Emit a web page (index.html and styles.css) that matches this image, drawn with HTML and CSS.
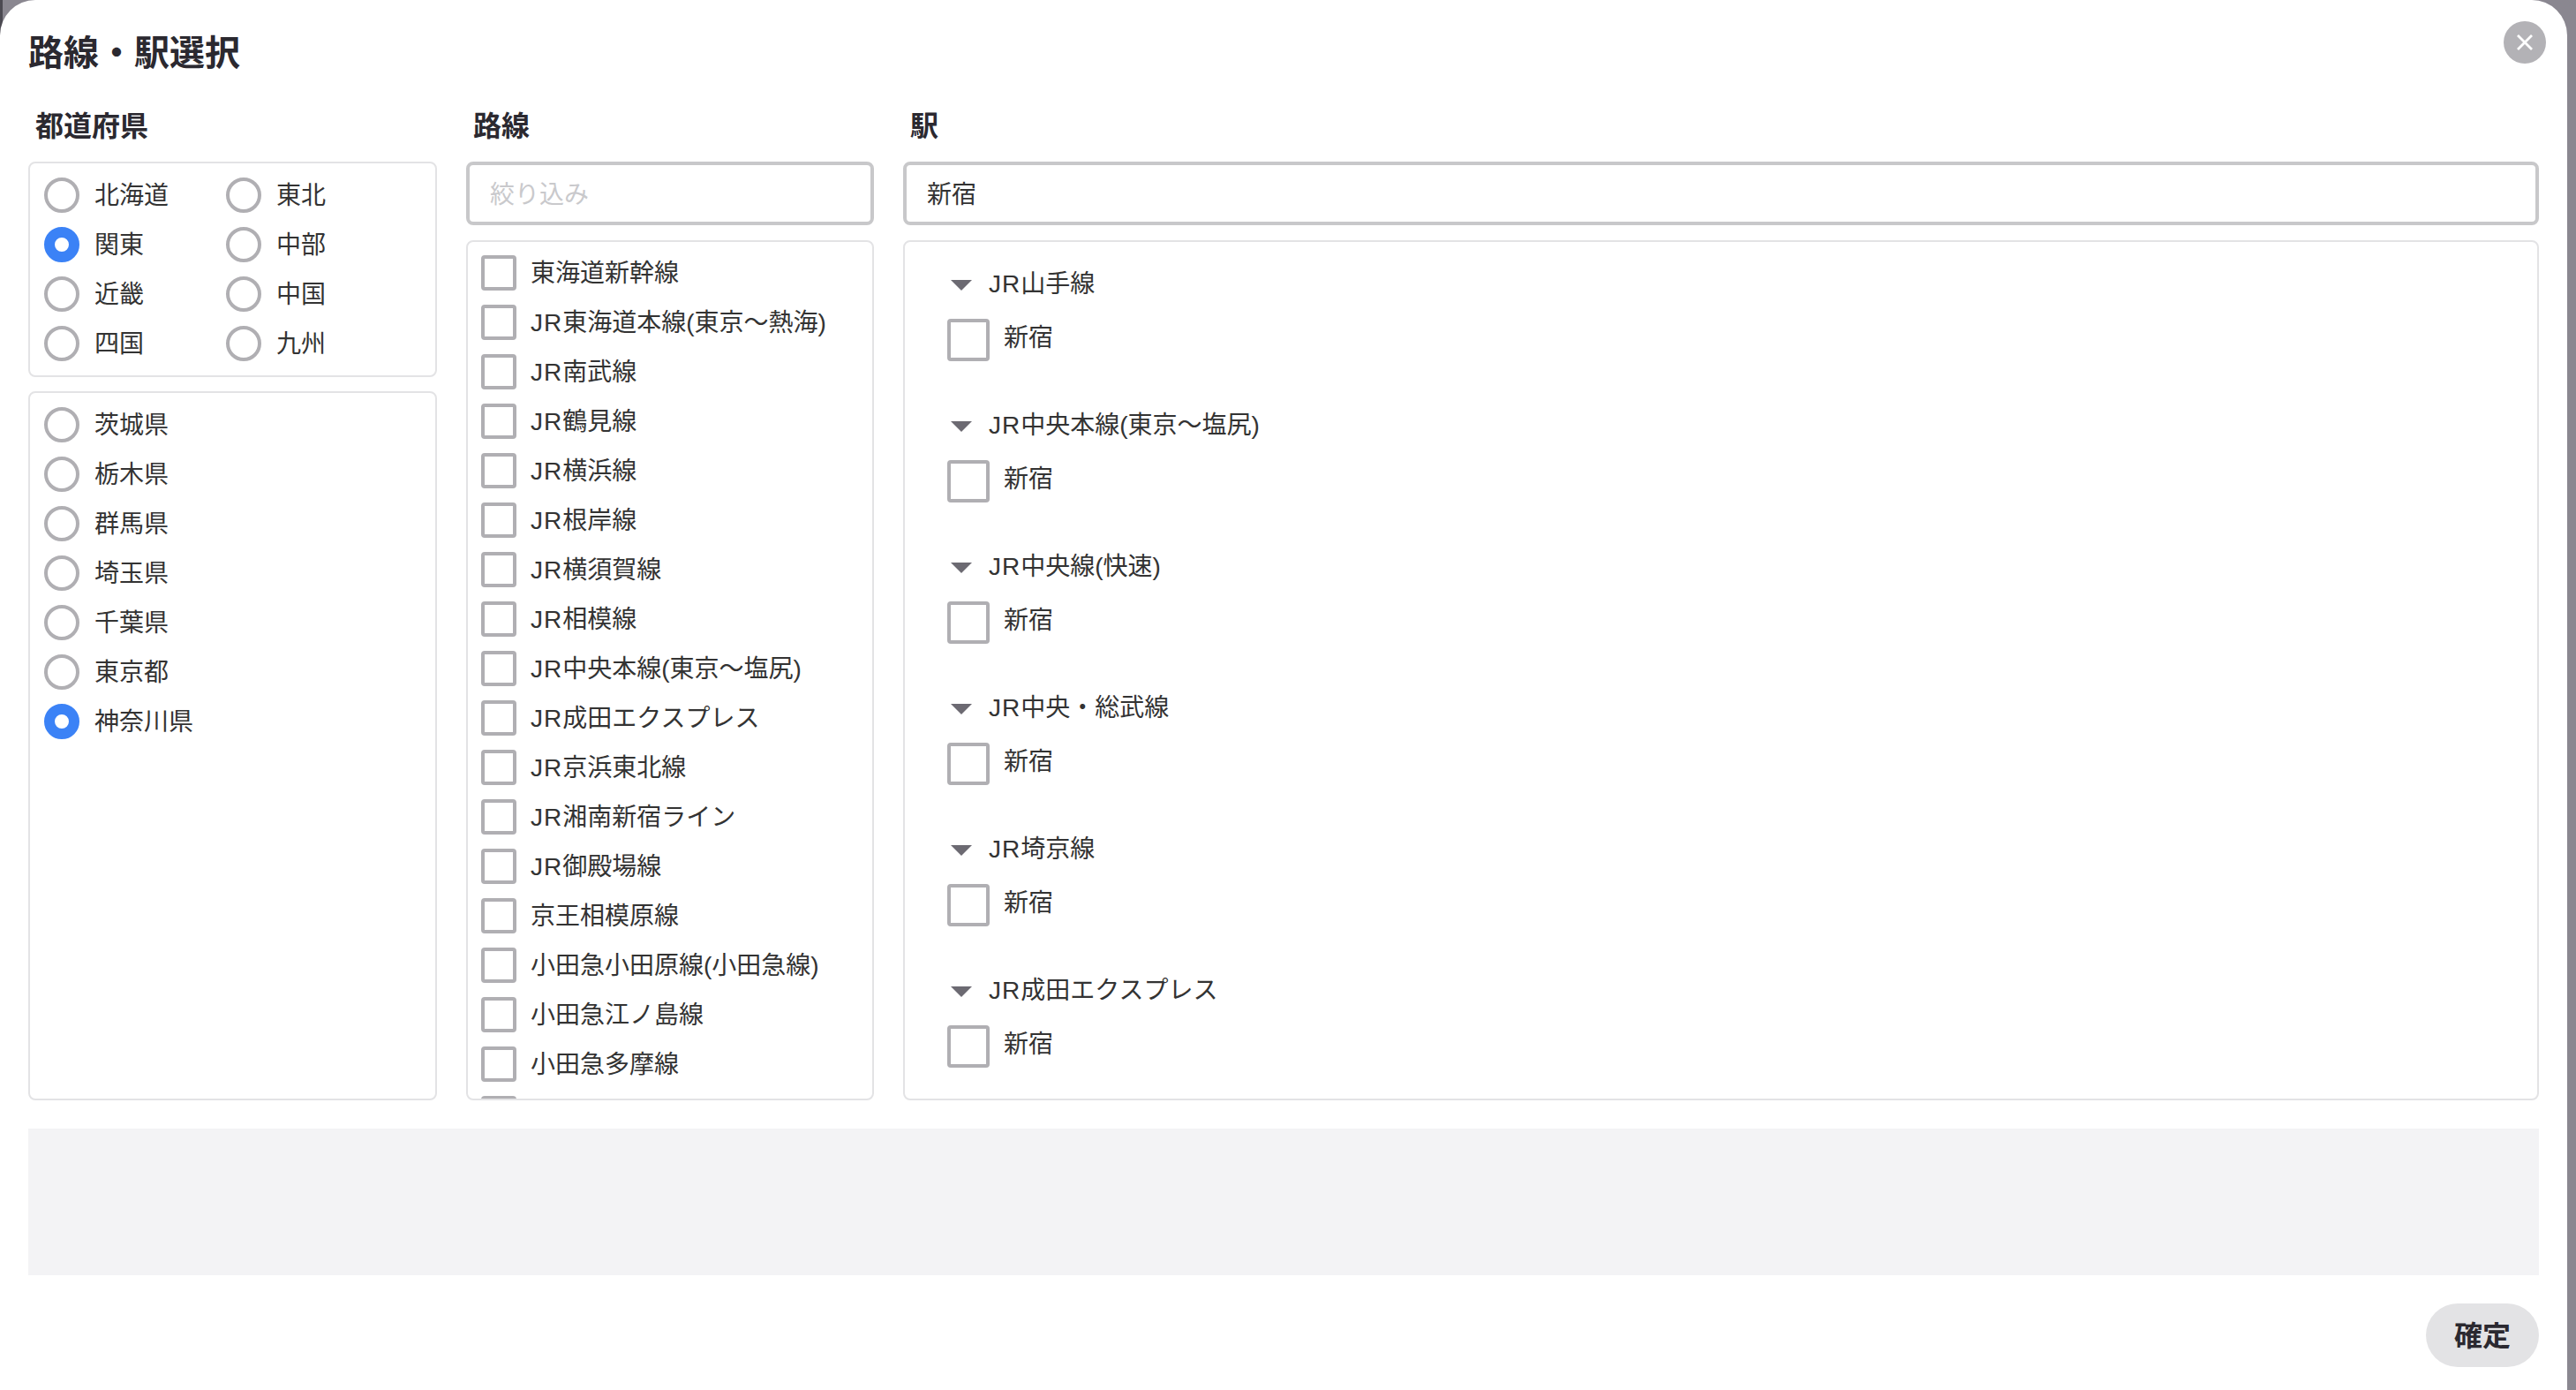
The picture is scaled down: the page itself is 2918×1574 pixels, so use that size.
FILE: index.html
```html
<!DOCTYPE html>
<html lang="ja">
<head>
<meta charset="utf-8">
<title>路線・駅選択</title>
<link rel="stylesheet" href="styles.css">
</head>
<body>
<div class="modal">
  <header class="modal-head">
    <h1 class="title">路線・駅選択</h1>
    <button class="close" type="button" aria-label="閉じる">
      <svg width="18" height="18" viewBox="0 0 18 18"><path d="M1 1 17 17M17 1 1 17" stroke="#fff" stroke-width="2.8" fill="none"/></svg>
    </button>
  </header>
  <div class="columns">
    <section class="col col-pref">
      <h2 class="heading">都道府県</h2>
      <div class="panel regions">
        <div class="opt"><span class="radio"></span>北海道</div>
        <div class="opt"><span class="radio"></span>東北</div>
        <div class="opt"><span class="radio on"></span>関東</div>
        <div class="opt"><span class="radio"></span>中部</div>
        <div class="opt"><span class="radio"></span>近畿</div>
        <div class="opt"><span class="radio"></span>中国</div>
        <div class="opt"><span class="radio"></span>四国</div>
        <div class="opt"><span class="radio"></span>九州</div>
      </div>
      <div class="panel prefs">
        <div class="opt"><span class="radio"></span>茨城県</div>
        <div class="opt"><span class="radio"></span>栃木県</div>
        <div class="opt"><span class="radio"></span>群馬県</div>
        <div class="opt"><span class="radio"></span>埼玉県</div>
        <div class="opt"><span class="radio"></span>千葉県</div>
        <div class="opt"><span class="radio"></span>東京都</div>
        <div class="opt"><span class="radio on"></span>神奈川県</div>
      </div>
    </section>
    <section class="col col-line">
      <h2 class="heading">路線</h2>
      <div class="field placeholder">絞り込み</div>
      <div class="panel lines">
        <div class="opt"><span class="check"></span><span>東海道新幹線</span></div>
        <div class="opt"><span class="check"></span><span><span class="jr">JR</span>東海道本線(東京〜熱海)</span></div>
        <div class="opt"><span class="check"></span><span><span class="jr">JR</span>南武線</span></div>
        <div class="opt"><span class="check"></span><span><span class="jr">JR</span>鶴見線</span></div>
        <div class="opt"><span class="check"></span><span><span class="jr">JR</span>横浜線</span></div>
        <div class="opt"><span class="check"></span><span><span class="jr">JR</span>根岸線</span></div>
        <div class="opt"><span class="check"></span><span><span class="jr">JR</span>横須賀線</span></div>
        <div class="opt"><span class="check"></span><span><span class="jr">JR</span>相模線</span></div>
        <div class="opt"><span class="check"></span><span><span class="jr">JR</span>中央本線(東京〜塩尻)</span></div>
        <div class="opt"><span class="check"></span><span><span class="jr">JR</span>成田エクスプレス</span></div>
        <div class="opt"><span class="check"></span><span><span class="jr">JR</span>京浜東北線</span></div>
        <div class="opt"><span class="check"></span><span><span class="jr">JR</span>湘南新宿ライン</span></div>
        <div class="opt"><span class="check"></span><span><span class="jr">JR</span>御殿場線</span></div>
        <div class="opt"><span class="check"></span><span>京王相模原線</span></div>
        <div class="opt"><span class="check"></span><span>小田急小田原線(小田急線)</span></div>
        <div class="opt"><span class="check"></span><span>小田急江ノ島線</span></div>
        <div class="opt"><span class="check"></span><span>小田急多摩線</span></div>
        <div class="opt"><span class="check"></span></div>
      </div>
    </section>
    <section class="col col-station">
      <h2 class="heading">駅</h2>
      <div class="field">新宿</div>
      <div class="panel stations">
        <div class="group">
          <div class="group-name"><span class="tri"></span><span><span class="jr">JR</span>山手線</span></div>
          <div class="station"><span class="check big"></span>新宿</div>
        </div>
        <div class="group">
          <div class="group-name"><span class="tri"></span><span><span class="jr">JR</span>中央本線(東京〜塩尻)</span></div>
          <div class="station"><span class="check big"></span>新宿</div>
        </div>
        <div class="group">
          <div class="group-name"><span class="tri"></span><span><span class="jr">JR</span>中央線(快速)</span></div>
          <div class="station"><span class="check big"></span>新宿</div>
        </div>
        <div class="group">
          <div class="group-name"><span class="tri"></span><span><span class="jr">JR</span>中央・総武線</span></div>
          <div class="station"><span class="check big"></span>新宿</div>
        </div>
        <div class="group">
          <div class="group-name"><span class="tri"></span><span><span class="jr">JR</span>埼京線</span></div>
          <div class="station"><span class="check big"></span>新宿</div>
        </div>
        <div class="group">
          <div class="group-name"><span class="tri"></span><span><span class="jr">JR</span>成田エクスプレス</span></div>
          <div class="station"><span class="check big"></span>新宿</div>
        </div>
      </div>
    </section>
  </div>
  <div class="selection"></div>
  <footer class="modal-foot"><button class="confirm" type="button">確定</button></footer>
</div>
</body>
</html>
```
FILE: styles.css
```css
* { box-sizing: border-box; }
html, body { height: 100%; }
body {
  margin: 0;
  background: linear-gradient(90deg, #4c4a52 3px, #8a8790 3px);
  font-family: "Liberation Sans", "Noto Sans CJK JP", sans-serif;
  color: #333;
  overflow: hidden;
}
.modal {
  width: 2908px;
  height: 1574px;
  background: #fff;
  border-radius: 40px 40px 0 0;
  padding: 0 32px;
  display: flex;
  flex-direction: column;
}
.modal-head {
  height: 120px;
  flex: none;
  display: flex;
  justify-content: space-between;
  align-items: flex-start;
}
.title {
  margin: 31px 0 0;
  font-size: 40px;
  line-height: 58px;
  font-weight: 700;
  color: #2b2930;
}
.close {
  width: 48px;
  height: 48px;
  margin: 24px -8px 0 0;
  border: 0;
  padding: 0;
  border-radius: 50%;
  background: #b3b2b6;
  display: flex;
  align-items: center;
  justify-content: center;
}
.columns {
  height: 1126px;
  flex: none;
  display: flex;
}
.col { display: flex; flex-direction: column; min-width: 0; }
.col-pref { width: 463px; margin-right: 33px; }
.col-line { width: 462px; margin-right: 33px; }
.col-station { flex: 1; }
.heading {
  margin: 0 0 16px 8px;
  font-size: 32px;
  line-height: 47px;
  height: 47px;
  font-weight: 700;
  color: #2b2930;
}
.panel {
  border: 2px solid #e3e3e5;
  border-radius: 8px;
  background: #fff;
  overflow: hidden;
}
.opt {
  height: 40px;
  display: flex;
  align-items: flex-start;
  font-size: 28px;
  line-height: 42px;
  white-space: nowrap;
}
.jr { letter-spacing: 1px; }
.regions {
  height: 244px;
  flex: none;
  padding: 16px 16px 0;
  display: grid;
  grid-template-columns: 206px 1fr;
  grid-auto-rows: 40px;
  row-gap: 16px;
  margin-bottom: 16px;
}
.prefs {
  flex: 1;
  padding: 16px 16px 0;
  display: flex;
  flex-direction: column;
  gap: 16px;
}
.radio {
  flex: none;
  width: 40px;
  height: 40px;
  margin-right: 17px;
  border: 4px solid #b0afb3;
  border-radius: 50%;
  background: #fff;
}
.radio.on {
  border: 12px solid #3b82f6;
}
.check {
  flex: none;
  width: 40px;
  height: 40px;
  margin-right: 16px;
  border: 4px solid #b0afb3;
  border-radius: 4px;
  background: #fff;
}
.check.big { width: 48px; height: 48px; margin-right: 16px; }
.field {
  height: 72px;
  border: 4px solid #c8c8ca;
  border-radius: 8px;
  padding: 0 23px;
  font-size: 28px;
  line-height: 67px;
  margin-bottom: 17px;
  flex: none;
}
.placeholder { color: #c9c9cc; }
.lines {
  flex: 1;
  padding: 15px 15px 0;
  display: flex;
  flex-direction: column;
  gap: 16px;
}
.lines .opt { flex: none; }
.stations {
  flex: 1;
  padding: 32px 48px 0;
  display: flex;
  flex-direction: column;
  gap: 40px;
}
.group { height: 120px; flex: none; }
.group-name {
  height: 32px;
  display: flex;
  align-items: center;
  font-size: 28px;
  line-height: 34px;
  white-space: nowrap;
}
.tri {
  flex: none;
  width: 0;
  height: 0;
  margin: 2px 19px 0 4px;
  border-left: 12px solid transparent;
  border-right: 12px solid transparent;
  border-top: 12px solid #6c6a72;
}
.station {
  margin-top: 23px;
  display: flex;
  align-items: flex-start;
  font-size: 28px;
  line-height: 43px;
}
.selection {
  flex: none;
  height: 166px;
  margin-top: 32px;
  background: #f3f3f5;
}
.modal-foot {
  flex: none;
  margin-top: 32px;
  display: flex;
  justify-content: flex-end;
}
.confirm {
  width: 128px;
  height: 72px;
  border: 0;
  padding: 0 0 4px;
  border-radius: 36px;
  background: #e3e3e5;
  font-family: inherit;
  font-size: 32px;
  font-weight: 700;
  color: #2b2930;
}
```
